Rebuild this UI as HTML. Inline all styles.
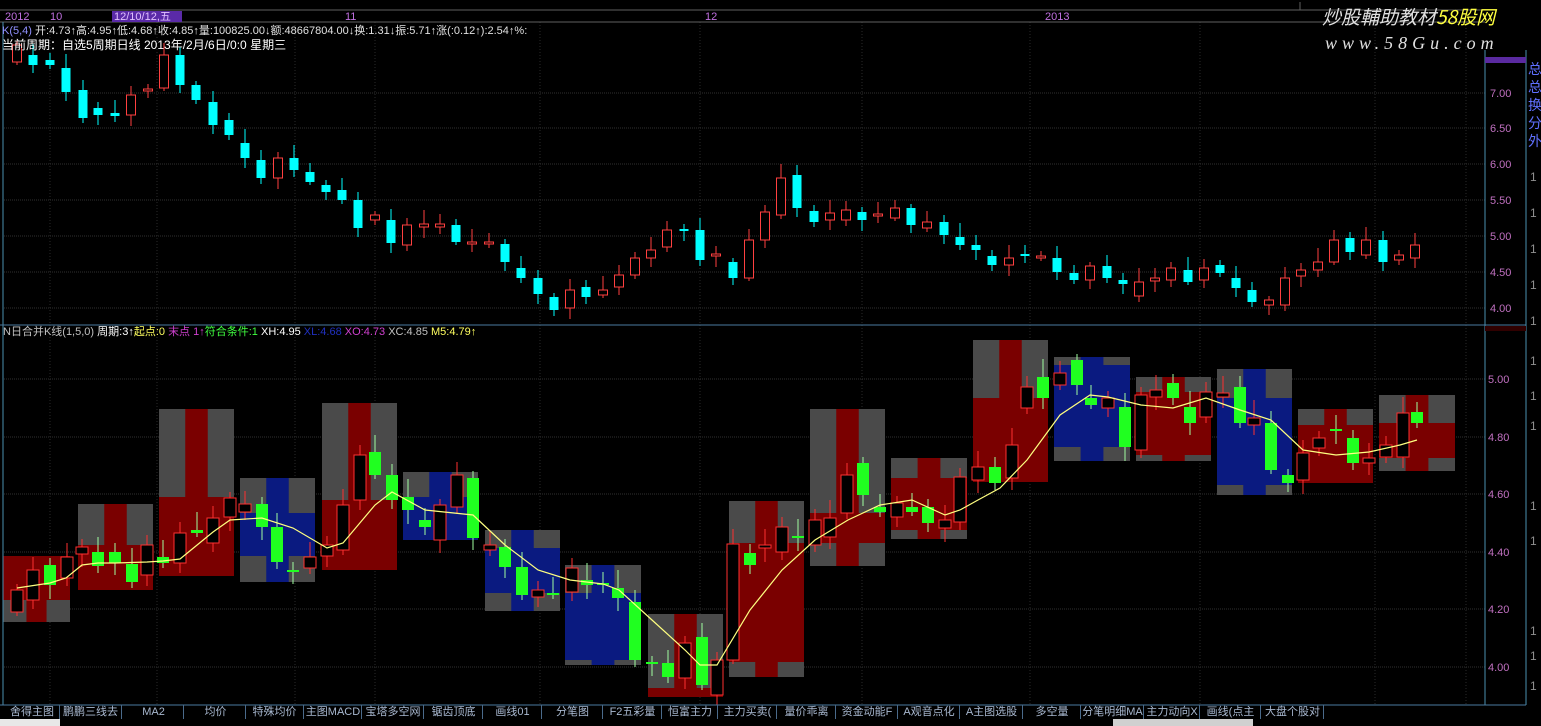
<!DOCTYPE html>
<html><head><meta charset="utf-8"><style>
html,body{margin:0;padding:0;background:#000;width:1541px;height:726px;overflow:hidden;font-family:"Liberation Sans","Noto Sans CJK SC",sans-serif}
svg{position:absolute;left:0;top:0}
.t{position:absolute;font-size:11px;white-space:nowrap;line-height:12px}
.tab{position:absolute;top:705px;height:14px;font-size:11px;line-height:14px;color:#a8b8d0;border-right:1px solid #4a6a8a;text-align:center;white-space:nowrap;overflow:hidden}
</style></head><body>
<svg id="s" width="1541" height="726" xmlns="http://www.w3.org/2000/svg">
<rect width="1541" height="726" fill="#000"/>
<g id="grid"></g>
<g id="boxes"></g>
<g id="low"></g>
<polyline id="ma" fill="none" stroke="#ffff80" stroke-width="1.2"/>
<g id="up"></g>
<line x1="0" y1="10" x2="1485" y2="10" stroke="#606060"/>
<line x1="0" y1="22" x2="1485" y2="22" stroke="#606060"/>
<line x1="3" y1="22" x2="3" y2="705" stroke="#4a90b0"/>
<line x1="0" y1="325" x2="1526" y2="325" stroke="#4a7aa0"/>
<line x1="1485" y1="50" x2="1485" y2="705" stroke="#4a90b0"/>
<line x1="1526" y1="50" x2="1526" y2="705" stroke="#4a90b0"/>
<line x1="0" y1="705" x2="1526" y2="705" stroke="#4a7aa0"/>
<rect x="1485" y="57" width="41" height="6" fill="#5a2aa0"/>
<rect x="1485" y="326" width="41" height="5" fill="#300000"/>
<g fill="#c070c0" font-size="11" font-family="Liberation Sans">
<text x="1490" y="97">7.00</text><text x="1490" y="132">6.50</text><text x="1490" y="168">6.00</text><text x="1490" y="204">5.50</text><text x="1490" y="240">5.00</text><text x="1490" y="276">4.50</text><text x="1490" y="312">4.00</text>
<text x="1488" y="383">5.00</text><text x="1488" y="441">4.80</text><text x="1488" y="498">4.60</text><text x="1488" y="556">4.40</text><text x="1488" y="613">4.20</text><text x="1488" y="671">4.00</text>
</g>
<g font-size="14" font-family="Noto Sans CJK SC">
<text x="1528" y="74" fill="#6070ff">总</text><text x="1528" y="92" fill="#6070ff">总</text><text x="1528" y="110" fill="#6070ff">换</text><text x="1528" y="128" fill="#6070ff">分</text><text x="1528" y="146" fill="#6070ff">外</text>
</g>
<g fill="#909090" font-size="12" font-family="Liberation Sans">
<text x="1530" y="181">1</text><text x="1530" y="217">1</text><text x="1530" y="253">1</text><text x="1530" y="289">1</text><text x="1530" y="325">1</text><text x="1530" y="365">1</text><text x="1530" y="400">1</text><text x="1530" y="430">1</text><text x="1530" y="510">1</text><text x="1530" y="545">1</text><text x="1530" y="635">1</text><text x="1530" y="660">1</text><text x="1530" y="690">1</text>
</g>
<rect x="112" y="11" width="70" height="11" fill="#5a2aa8"/>
<g fill="#c070e0" font-size="11" font-family="Liberation Sans">
<text x="5" y="20">2012</text><text x="50" y="20">10</text><text x="114" y="20" fill="#e0c0ff">12/10/12,五</text><text x="345" y="20">11</text><text x="705" y="20">12</text><text x="1045" y="20">2013</text>
</g>
<line x1="1300" y1="2" x2="1300" y2="10" stroke="#606060"/>
<rect x="0" y="718" width="1541" height="8" fill="#000"/>
<rect x="0" y="719" width="60" height="7" fill="#e8e8e8"/>
<rect x="1113" y="719" width="140" height="7" fill="#d0d0d0"/>
</svg>
<div class="t" style="left:2px;top:25px;color:#e0e0e0"><span style="color:#9090ff">K(5,4)</span> 开:4.73↑高:4.95↑低:4.68↑收:4.85↑量:100825.00↓额:48667804.00↓换:1.31↓振:5.71↑涨(:0.12↑):2.54↑%:</div>
<div class="t" style="left:2px;top:39px;color:#ffffff;font-size:12px">当前周期：自选5周期日线 2013年/2月/6日/0:0 星期三</div>
<div class="t" style="left:3px;top:326px;color:#c0c0c0">N日合并K线(1,5,0) <span style="color:#fff">周期:3↑</span><span style="color:#ffff60">起点:0 </span><span style="color:#d040d0">末点 1↑</span><span style="color:#40ff40">符合条件:1 </span><span style="color:#fff">XH:4.95 </span><span style="color:#2030c0">XL:4.68 </span><span style="color:#d040d0">XO:4.73 </span><span style="color:#c0c0c0">XC:4.85 </span><span style="color:#ffff60">M5:4.79↑</span></div>
<div class="t" style="left:1322px;top:6px;font-size:19px;line-height:22px;color:#e0e0e0;font-style:italic;font-family:'Noto Sans CJK SC',sans-serif">炒股輔助教材<span style="color:#ffff40">58股网</span></div>
<div class="t" style="left:1325px;top:33px;font-size:18px;line-height:20px;color:#e0e0e0;font-style:italic;letter-spacing:5px;font-family:'Liberation Serif',serif">www.58Gu.com</div>
<div id="tabs"></div>
<script>
const NS="http://www.w3.org/2000/svg";
function el(p,t,a){const e=document.createElementNS(NS,t);for(const k in a)e.setAttribute(k,a[k]);p.appendChild(e);return e;}
const g=document.getElementById('grid');
[93,128,164,200,236,272,308].forEach(y=>el(g,'line',{x1:4,y1:y,x2:1485,y2:y,stroke:'#303030','stroke-dasharray':'1,1'}));
[379,437,494,552,609,667].forEach(y=>el(g,'line',{x1:4,y1:y,x2:1485,y2:y,stroke:'#303030','stroke-dasharray':'1,1'}));
[50,157,295,375,540,700,862,1030,1200,1375,1466].forEach(x=>el(g,'line',{x1:x,y1:22,x2:x,y2:705,stroke:'#2a2a2a','stroke-dasharray':'1,2'}));
const U=[[17,45,62,'r'],[33,55,65,'c'],[50,60,65,'c'],[66,68,92,'c'],[83,90,118,'c'],[98,108,115,'c'],[115,113,116,'c'],[131,95,115,'r'],[148,89,91,'r'],[164,55,88,'r'],[180,55,85,'c'],[196,85,100,'c'],[213,102,125,'c'],[229,120,135,'c'],[245,143,158,'c'],[261,160,178,'c'],[278,158,178,'r'],[294,158,170,'c'],[310,172,182,'c'],[326,185,192,'c'],[342,190,200,'c'],[358,200,228,'c'],[375,215,220,'r'],[391,220,243,'c'],[407,225,245,'r'],[424,224,227,'r'],[440,224,227,'r'],[456,225,242,'c'],[472,242,244,'r'],[489,242,244,'r'],[505,244,262,'c'],[521,268,278,'c'],[538,278,294,'c'],[554,297,310,'c'],[570,290,308,'r'],[586,287,297,'c'],[603,290,295,'r'],[619,275,287,'r'],[635,258,275,'r'],[651,250,258,'r'],[667,230,247,'r'],[684,229,231,'c'],[700,230,260,'c'],[716,254,256,'r'],[733,262,278,'c'],[749,240,278,'r'],[765,212,240,'r'],[781,178,215,'r'],[797,175,208,'c'],[814,211,222,'c'],[830,213,220,'r'],[846,210,220,'r'],[862,212,220,'c'],[878,214,216,'r'],[895,208,218,'r'],[911,208,225,'c'],[927,222,228,'r'],[944,222,235,'c'],[960,237,245,'c'],[976,245,250,'c'],[992,256,265,'c'],[1009,258,265,'r'],[1025,254,256,'c'],[1041,256,258,'r'],[1057,258,272,'c'],[1074,273,280,'c'],[1090,266,280,'r'],[1107,266,278,'c'],[1123,280,284,'c'],[1139,282,296,'r'],[1155,278,281,'r'],[1171,268,280,'r'],[1188,270,282,'c'],[1204,268,280,'r'],[1220,265,273,'c'],[1236,278,288,'c'],[1252,290,302,'c'],[1269,300,305,'r'],[1285,278,305,'r'],[1301,270,276,'r'],[1318,262,270,'r'],[1334,240,262,'r'],[1350,238,252,'c'],[1366,240,255,'r'],[1383,240,262,'c'],[1399,255,260,'r'],[1415,245,258,'r']];
const up=document.getElementById('up');
U.forEach((c,i)=>{const [x,t,b,k]=c;const col=k=='r'?'#ff4040':'#00ffff';const wt=t-4-(i*7%11),wb=b+3+(i*5%9);
el(up,'line',{x1:x,y1:Math.max(40,wt),x2:x,y2:wb,stroke:col});
el(up,'rect',{x:x-4.5,y:t,width:9,height:Math.max(1,b-t),fill:k=='r'?'#000':col,stroke:col,'stroke-width':k=='r'?1:0});});
const B=[[3,70,556,622,556,600,'r'],[78,153,504,590,545,590,'r'],[159,234,409,576,497,576,'r'],[240,315,478,582,513,556,'b'],[322,397,403,570,500,570,'r'],[403,478,472,540,497,540,'b'],[485,560,530,611,548,593,'b'],[565,641,565,665,593,660,'b'],[648,723,614,697,688,697,'r'],[729,804,501,677,543,662,'r'],[810,885,409,566,513,543,'r'],[891,967,458,539,478,530,'r'],[973,1048,340,482,398,482,'r'],[1054,1130,357,461,365,447,'b'],[1136,1211,377,461,392,455,'r'],[1217,1292,369,495,398,485,'b'],[1298,1373,409,483,425,483,'r'],[1379,1455,395,471,423,458,'r']];
const bx=document.getElementById('boxes');
B.forEach(b=>{const [x0,x1,gt,gb,bt,bb,c]=b;const col=c=='r'?'#7a0000':'#0a1a80';const w=x1-x0;
el(bx,'rect',{x:x0,y:gt,width:w,height:gb-gt,fill:'#4a4a4a'});
el(bx,'rect',{x:x0,y:bt,width:w,height:bb-bt,fill:col});
el(bx,'rect',{x:x0+w*0.35,y:gt,width:w*0.3,height:gb-gt,fill:col});});
const L=[[17,590,612,'r'],[33,570,600,'r'],[50,565,585,'g'],[67,557,578,'r'],[82,547,554,'r'],[98,552,566,'g'],[115,552,563,'g'],[132,564,582,'g'],[147,545,575,'r'],[163,557,563,'g'],[180,533,563,'r'],[197,530,533,'g'],[213,518,543,'r'],[230,498,517,'r'],[245,504,512,'r'],[262,504,527,'g'],[277,527,562,'g'],[293,570,572,'g'],[310,557,568,'r'],[327,545,556,'r'],[343,505,550,'r'],[360,455,500,'r'],[375,452,475,'g'],[392,475,500,'g'],[408,497,510,'g'],[425,520,527,'g'],[440,505,540,'r'],[457,475,507,'r'],[473,478,538,'g'],[490,545,550,'r'],[505,547,567,'g'],[522,567,595,'g'],[538,590,597,'r'],[553,593,595,'g'],[572,568,592,'r'],[587,580,585,'g'],[603,583,585,'g'],[618,588,598,'g'],[635,602,660,'g'],[652,662,664,'g'],[668,663,677,'g'],[685,643,678,'r'],[702,637,685,'g'],[717,660,695,'r'],[733,544,660,'r'],[750,553,565,'g'],[765,545,548,'r'],[782,527,552,'r'],[798,536,538,'g'],[815,520,545,'r'],[830,518,537,'r'],[847,475,513,'r'],[863,463,495,'g'],[880,507,512,'g'],[897,503,517,'r'],[912,507,512,'g'],[928,507,523,'g'],[945,520,528,'r'],[960,477,522,'r'],[978,467,480,'r'],[995,467,483,'g'],[1012,445,478,'r'],[1027,387,408,'r'],[1043,377,398,'g'],[1060,373,385,'r'],[1077,360,385,'g'],[1091,398,405,'g'],[1108,398,408,'r'],[1125,407,447,'g'],[1141,395,450,'r'],[1156,390,397,'r'],[1173,383,398,'g'],[1190,407,423,'g'],[1206,392,417,'r'],[1223,393,397,'r'],[1240,387,423,'g'],[1254,418,425,'r'],[1271,423,470,'g'],[1288,475,483,'g'],[1303,453,480,'r'],[1319,438,448,'r'],[1336,429,431,'g'],[1353,438,463,'g'],[1369,458,463,'r'],[1386,445,457,'r'],[1403,413,457,'r'],[1417,412,423,'g']];
const lo=document.getElementById('low');
L.forEach((c,i)=>{const [x,t,b,k]=c;const col=k=='r'?'#ff3030':'#20ff20';const wt=t-6-(i*7%13),wb=b+4+(i*5%11);
el(lo,'line',{x1:x,y1:wt,x2:x,y2:wb,stroke:k=='r'?'#ff3030':'#a0ffa0'});
el(lo,'rect',{x:x-6,y:t,width:12,height:Math.max(1,b-t),fill:k=='r'?'#000':col,stroke:col,'stroke-width':k=='r'?1:0});});
document.getElementById('ma').setAttribute('points',"17,588 50,583 66,578 82,565 98,563 115,563 147,562 163,561 180,559 213,532 230,520 262,518 293,528 327,548 343,543 375,505 392,492 425,510 473,515 505,545 538,570 570,580 603,584 619,590 652,620 685,650 700,665 717,665 750,610 782,570 815,540 848,520 880,505 912,500 945,515 960,510 978,500 1000,488 1027,460 1060,415 1090,395 1108,397 1141,405 1173,408 1206,398 1240,410 1271,420 1303,450 1336,455 1369,452 1400,445 1417,440");
const T=[["舍得主图",5,55],["鹏鹏三线去",60,62],["MA2",124,60],["均价",186,60],["特殊均价",246,58],["主图MACD",305,57],["宝塔多空网",363,61],["锯齿顶底",425,58],["画线01",484,58],["分笔图",543,60],["F2五彩量",604,58],["恒富主力",663,55],["主力买卖(",719,58],["量价乖离",778,58],["资金动能F",837,61],["A观音点化",899,61],["A主图选股",961,62],["多空量",1024,57],["分笔明细MA",1082,62],["主力动向X",1145,55],["画线(点主",1201,60],["大盘个股对",1262,62]];
const tb=document.getElementById('tabs');
T.forEach(t=>{const d=document.createElement('div');d.className='tab';d.style.left=t[1]+'px';d.style.width=(t[2]-1)+'px';d.textContent=t[0];tb.appendChild(d);});
</script>
</body></html>
